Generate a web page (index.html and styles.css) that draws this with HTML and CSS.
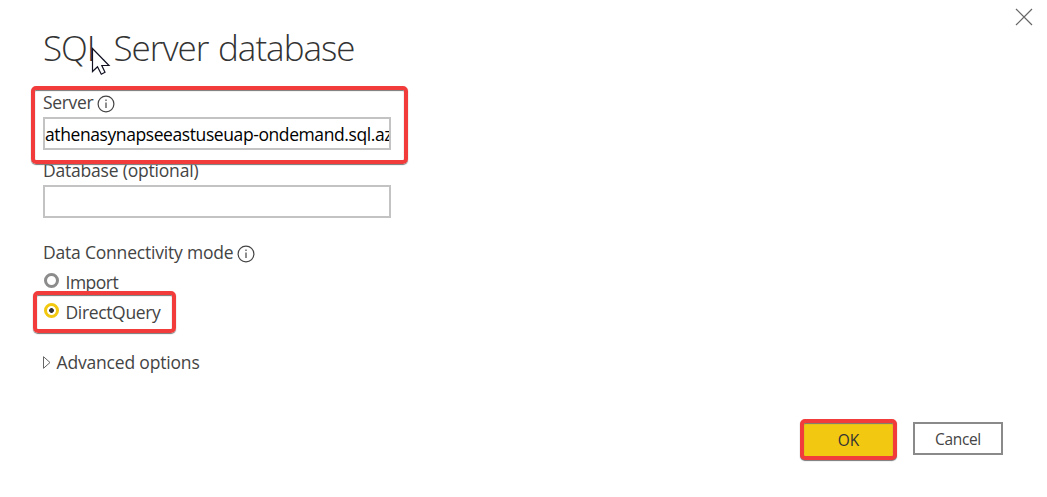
FILE: index.html
```html
<!DOCTYPE html>
<html lang="en">
<head>
<meta charset="utf-8">
<title>SQL Server database</title>
<link rel="stylesheet" href="styles.css">
</head>
<body>
<main class="dialog">
  <button class="close" aria-label="Close"><svg width="18" height="18" viewBox="0 0 18 18"><path d="M1 1L17 17M17 1L1 17"/></svg></button>
  <h1 class="title"><span class="title-text">SQL Server database</span>
    <svg class="cursor" width="20" height="30" viewBox="0 0 20 30"><path d="M1.5 1.5V24.5L6.5 19.7L10.3 27.2L14 25.3L10.8 18.5H18Z"/></svg>
  </h1>
  <section class="field server">
    <label class="label"><span class="t-server">Server</span><svg class="info" width="18" height="18" viewBox="0 0 18 18"><circle cx="9" cy="9" r="7.9"/><path d="M9 7.4V13M9 4.6V6"/></svg></label>
    <div class="input"><span class="t-value">athenasynapseeastuseuap-ondemand.sql.az</span></div>
    <i class="mark mark-server"></i>
  </section>
  <section class="field">
    <label class="label"><span class="t-database">Database (optional)</span></label>
    <div class="input"></div>
  </section>
  <section class="mode">
    <div class="label"><span class="t-mode">Data Connectivity mode</span><svg class="info" width="18" height="18" viewBox="0 0 18 18"><circle cx="9" cy="9" r="7.9"/><path d="M9 7.4V13M9 4.6V6"/></svg></div>
    <div class="option"><i class="radio"></i><span class="t-import">Import</span></div>
    <div class="option direct"><i class="radio checked"></i><span class="t-direct">DirectQuery</span><i class="mark mark-direct"></i></div>
  </section>
  <div class="advanced"><svg width="8" height="13" viewBox="0 0 8 13"><path d="M.5 .7V12.3L7 6.5Z"/></svg><span class="t-advanced">Advanced options</span></div>
  <footer class="actions">
    <button class="btn ok"><span class="t-ok">OK</span></button>
    <button class="btn cancel"><span class="t-cancel">Cancel</span></button>
  </footer>
</main>
</body>
</html>
```
FILE: styles.css
```css
* { box-sizing: border-box; }
body { margin: 0; background: #fff; color: #444; font: 17.5px/24px "Open Sans", "Noto Sans", sans-serif; }
.dialog { position: relative; width: 1047px; height: 497px; padding: 26px 44px 0 43px; overflow: hidden; }
span { white-space: nowrap; }
button { font: inherit; color: inherit; padding: 0; }
.close { position: absolute; left: 1015px; top: 8px; width: 18px; height: 18px; border: 0; background: none; }
svg { display: block; fill: none; flex: none; }
.close path { stroke: #666; stroke-width: 1.2; }
.title { position: relative; margin: 0; height: 65px; font-size: 35px; line-height: 44px; font-weight: 300; color: #333; letter-spacing: -1px; word-spacing: 1.6px; }
.cursor { position: absolute; left: 48px; top: 21px; }
.cursor path { fill: #fff; stroke: #112; stroke-width: 1.2; }
.field { position: relative; width: 348px; height: 68px; }
.label { display: flex; height: 26px; line-height: 23px; letter-spacing: -.2px; }
.t-server { letter-spacing: -.35px; }
.info { margin: 4px 0 0 4px; }
.info circle, .info path { stroke: #444; stroke-width: 1.2; }
.input { height: 33px; border: 2px solid #c3c3c3; overflow: hidden; color: #000; line-height: 30px; letter-spacing: -.41px; }
.mark { position: absolute; border: 4px solid #f23c3c; border-radius: 5px; box-shadow: 0 1px 1px #777, inset 0 1px 1px #777; z-index: 1; }
.mark-server { left: -12px; top: -5px; width: 377px; height: 78px; }
.mode { padding-top: 14px; }
.mode .label { height: 29px; }
.option { position: relative; display: flex; height: 30px; letter-spacing: -.35px; line-height: 25px; }
.t-import { letter-spacing: -.5px; }
.radio { width: 15px; height: 15px; margin: 3px 6.5px 0 1px; border: 3px solid #8c8c8c; border-radius: 50%; flex: none; }
.radio.checked { border-color: #f2c811; background: radial-gradient(circle, #333 0 2px, #fff 2.8px); }
.mark-direct { left: -10px; top: -9px; width: 143px; height: 42px; }
.advanced { display: flex; align-items: center; gap: 5.5px; margin-top: 19px; height: 26px; letter-spacing: -.18px; }
.advanced path { stroke: #666; }
.actions { display: flex; justify-content: flex-end; gap: 16px; margin-top: 44px; align-items: flex-start; }
.btn { font-size: 15.5px; line-height: 22px; }
.ok { width: 97px; height: 41px; background: #f2c811; border: 4px solid #f23c3c; border-radius: 5px; box-shadow: 0 1px 1px #777, inset 0 1px 1px #777; color: #333; }
.cancel { width: 90px; height: 33px; margin-top: 3px; border: 2px solid #8a8a8a; background: #fff; letter-spacing: -.35px; }
```
